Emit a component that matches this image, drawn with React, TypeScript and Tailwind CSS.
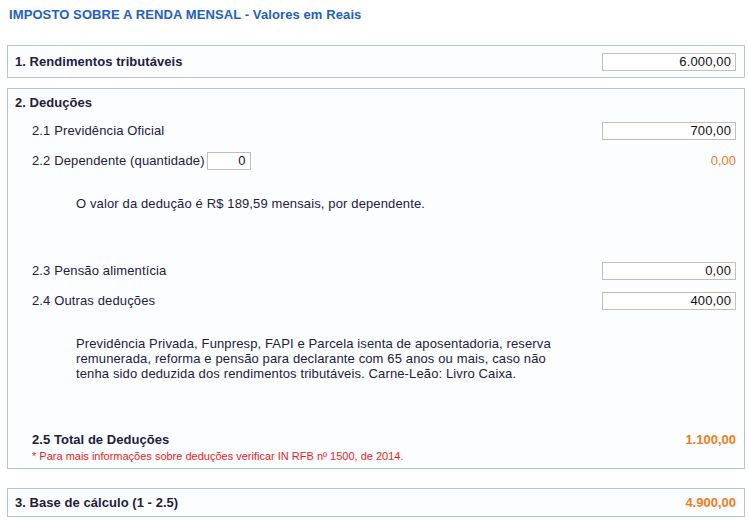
import React from "react";

const font = { fontFamily: '"Liberation Sans", Arial, sans-serif' };

function Field({ value, w = "w-[134px]" }: { value: string; w?: string }) {
  return (
    <input
      readOnly
      value={value}
      className={`${w} h-[18px] border border-[#c3c0b8] bg-white text-right pr-[4px] text-[13px] text-[#111] outline-none`}
      style={font}
    />
  );
}

export default function App() {
  return (
    <div className="w-[748px] h-[520px] bg-white px-[7px] text-[13px] tracking-[0.13px] text-[#1c2140]" style={font}>
      <div className="pt-[7px] pl-[2px] h-[45px] text-[13px] font-bold tracking-[0.1px] text-[#2160c4] leading-[16px]">
        IMPOSTO SOBRE A RENDA MENSAL - Valores em Reais
      </div>

      <div className="h-[33px] w-[738px] border border-[#b9c4cf] bg-[#fcfdff] flex items-center justify-between pl-[7px] pr-[8px]">
        <span className="font-bold tracking-[0.05px]">1. Rendimentos tributáveis</span>
        <Field value="6.000,00" />
      </div>

      <div className="mt-[10px] w-[738px] border border-[#b9c4cf] bg-[#fcfdff] pt-[1px] pb-[5px]">
        <div className="h-[26px] flex items-center pl-[7px] font-bold tracking-[0.05px]">2. Deduções</div>

        <div className="h-[30px] flex items-center justify-between pl-[24px] pr-[8px]">
          <span>2.1 Previdência Oficial</span>
          <Field value="700,00" />
        </div>

        <div className="h-[30px] flex items-center justify-between pl-[24px] pr-[8px]">
          <div className="flex items-center gap-[2px]">
            <span>2.2 Dependente (quantidade)</span>
            <Field value="0" w="w-[44px]" />
          </div>
          <span className="text-[#f47a20] tracking-normal">0,00</span>
        </div>

        <div className="h-[80px] pl-[68px] pt-[20px] leading-[15px]">
          O valor da dedução é R$ 189,59 mensais, por dependente.
        </div>

        <div className="h-[30px] flex items-center justify-between pl-[24px] pr-[8px]">
          <span>2.3 Pensão alimentícia</span>
          <Field value="0,00" />
        </div>

        <div className="h-[30px] flex items-center justify-between pl-[24px] pr-[8px]">
          <span>2.4 Outras deduções</span>
          <Field value="400,00" />
        </div>

        <div className="h-[115px] pl-[68px] pt-[20px] leading-[15px]">
          Previdência Privada, Funpresp, FAPI e Parcela isenta de aposentadoria, reserva
          <br />
          remunerada, reforma e pensão para declarante com 65 anos ou mais, caso não
          <br />
          tenha sido deduzida dos rendimentos tributáveis. Carne-Leão: Livro Caixa.
        </div>

        <div className="h-[18px] flex items-center justify-between pl-[24px] pr-[8px] font-bold tracking-[0.05px]">
          <span>2.5 Total de Deduções</span>
          <span className="text-[#f47a20] tracking-normal">1.100,00</span>
        </div>
        <div className="h-[14px] leading-[14px] pl-[24px] text-[11px] tracking-normal text-[#f01c24]">
          * Para mais informações sobre deduções verificar IN RFB nº 1500, de 2014.
        </div>
      </div>

      <div className="mt-[19px] h-[29px] w-[738px] border border-[#b9c4cf] bg-[#fcfdff] flex items-center justify-between pl-[7px] pr-[8px] font-bold tracking-[0.05px]">
        <span>3. Base de cálculo (1 - 2.5)</span>
        <span className="text-[#f47a20] tracking-normal">4.900,00</span>
      </div>
    </div>
  );
}
